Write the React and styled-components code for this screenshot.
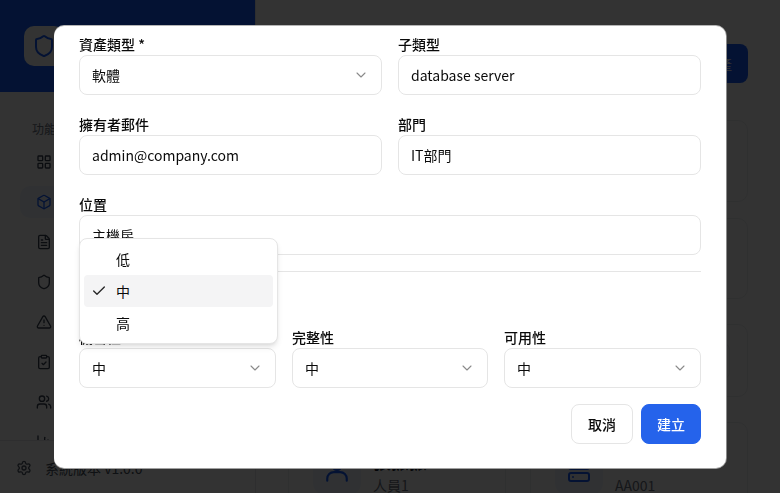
import React from "react";
import styled, { createGlobalStyle } from "styled-components";
import {
  LayoutGrid, Box, FileText, Shield, TriangleAlert, ClipboardCheck, Users, ChartColumn,
  Settings, ChevronDown, Check, Server,
} from "lucide-react";

const GlobalStyle = createGlobalStyle`
  html, body { margin: 0; padding: 0; height: 100%; }
  body { font-family: "Noto Sans CJK TC", "Noto Sans", sans-serif; color: #0a0a0a; overflow: hidden; background: #fff; }
  * { box-sizing: border-box; }
`;

const Page = styled.div`
  display: flex;
  width: 780px;
  height: 493px;
  overflow: hidden;
  background: #fdfeff;
`;

const Sidebar = styled.aside`
  width: 256px;
  height: 493px;
  flex: none;
  display: flex;
  flex-direction: column;
  background: #fff;
  border-right: 1px solid #e5e7eb;
`;

const Brand = styled.div`
  height: 92px;
  flex: none;
  padding: 26px 24px;
  background: #155dfc;
`;

const BrandLogo = styled.div`
  width: 40px;
  height: 40px;
  border-radius: 10px;
  background: #fff;
  display: flex;
  align-items: center;
  justify-content: center;
  color: #155dfc;
`;

const Nav = styled.nav`
  flex: 1;
  min-height: 0;
  overflow: hidden;
  padding: 28px 20px 0;
`;

const NavTitle = styled.div`
  font-size: 12px;
  line-height: 18px;
  color: #6b7280;
  margin: 0 0 8px 12px;
`;

const NavItem = styled.div`
  height: 32px;
  margin-bottom: 8px;
  padding-left: 16px;
  display: flex;
  align-items: center;
  border-radius: 10px;
  color: ${({ $active }) => ($active ? "#155dfc" : "#374151")};
  background: ${({ $active }) => ($active ? "#eff6ff" : "transparent")};
`;

const SideFooter = styled.div`
  height: 53px;
  flex: none;
  display: flex;
  align-items: center;
  gap: 13px;
  padding: 1px 0 0 16px;
  border-top: 1px solid #e5e7eb;
  font-size: 14px;
  color: #4b5563;
`;

const Main = styled.main`
  flex: 1;
  padding: 44px 32px 0;
  display: flex;
  flex-direction: column;
  align-items: flex-end;
`;

const PageButton = styled.div`
  width: 100px;
  height: 39px;
  flex: none;
  padding-right: 16px;
  border-radius: 8px;
  background: #155dfc;
  color: #fff;
  font-size: 14px;
  display: flex;
  align-items: center;
  justify-content: flex-end;
`;

const CardGrid = styled.div`
  align-self: stretch;
  flex: none;
  margin-top: 37px;
  display: grid;
  grid-template-columns: 218px 218px;
  grid-template-rows: 82px 81px 82px 91px;
  column-gap: 24px;
  row-gap: 16px;
  align-items: end;
`;

const AssetCard = styled.div`
  height: ${({ $height }) => $height}px;
  background: #fff;
  border: 1px solid #eceef1;
  border-radius: 10px;
  padding: 24px;
  display: flex;
  align-items: flex-start;
  gap: 12px;
`;

const StatusBox = styled.div`
  width: 70px;
  height: 38px;
  flex: none;
  align-self: center;
  margin: 0 -7px 0 auto;
  border: 1px solid #eceef1;
  border-radius: 8px;
`;

const AssetIcon = styled.div`
  width: 48px;
  height: 48px;
  flex: none;
  border-radius: 12px;
  background: #eff6ff;
  color: #155dfc;
  display: flex;
  align-items: center;
  justify-content: center;
`;

const AssetText = styled.div`
  font-size: 14px;
  line-height: 20px;
  color: #6b7280;
  strong { display: block; font-size: 18px; line-height: 28px; font-weight: 700; color: #111827; }
`;

const Overlay = styled.div`
  position: fixed;
  inset: 0;
  background: rgba(0, 0, 0, 0.8);
`;

const Dialog = styled.div`
  position: fixed;
  left: 54px;
  top: 26px;
  width: 672px;
  height: 442px;
  padding: 0 25px;
  background: #fff;
  border-radius: 10px;
  box-shadow: 0 -1px 0 #b5b5b5, 0 1px 0 #a0a0a0, 1px 0 0 #8a8a8a;
  overflow: hidden;
`;

const FormBody = styled.div`
  height: 362px;
  overflow: hidden;
`;

const TwoCols = styled.div`
  display: grid;
  grid-template-columns: 303px 303px;
  column-gap: 16px;
  row-gap: 21px;
  margin-top: 10px;
`;

const Field = styled.div`
  grid-column: ${({ $wide }) => ($wide ? "1 / -1" : "auto")};
  display: flex;
  flex-direction: column;
`;

const Label = styled.label`
  font-size: 14px;
  line-height: 17px;
  margin-bottom: 2px;
  font-weight: 500;
  color: #0a0a0a;
`;

const Control = styled.div`
  height: 40px;
  padding: 0 12px;
  display: flex;
  align-items: center;
  justify-content: space-between;
  border: 1px solid #e5e5e5;
  border-radius: 8px;
  background: #fff;
  font-size: 14px;
  color: #0a0a0a;
  svg { color: #8a8a8a; flex: none; }
`;

const Divider = styled.hr`
  margin: 16px 0 0;
  border: 0;
  border-top: 1px solid #e5e5e5;
`;

const CiaTitle = styled.div`
  height: 57px;
`;

const ThreeCols = styled.div`
  display: grid;
  grid-template-columns: 197px 196px 197px;
  column-gap: 16px;
`;

const Actions = styled.div`
  display: flex;
  justify-content: flex-end;
  gap: 8px;
  margin-top: 16px;
`;

const Button = styled.button`
  height: 40px;
  padding: 0;
  width: ${({ $primary }) => ($primary ? "60px" : "62px")};
  border-radius: 8px;
  border: 1px solid ${({ $primary }) => ($primary ? "#2563eb" : "#e5e5e5")};
  background: ${({ $primary }) => ($primary ? "#2563eb" : "#fff")};
  color: ${({ $primary }) => ($primary ? "#fff" : "#0a0a0a")};
  font: 500 14px "Noto Sans CJK TC", sans-serif;
`;

const Menu = styled.div`
  position: fixed;
  left: 79px;
  top: 238px;
  width: 199px;
  height: 106px;
  padding: 4px;
  background: #fff;
  border: 1px solid #e5e5e5;
  border-radius: 8px;
  box-shadow: 0 4px 6px -1px rgba(0, 0, 0, 0.1), 0 2px 4px -2px rgba(0, 0, 0, 0.1);
`;

const MenuItem = styled.div`
  position: relative;
  height: 32px;
  padding-left: 32px;
  display: flex;
  align-items: center;
  border-radius: 4px;
  font-size: 14px;
  color: #0a0a0a;
  background: ${({ $active }) => ($active ? "#f4f4f5" : "transparent")};
`;

const MenuCheck = styled.span`
  position: absolute;
  left: 7px;
  top: 8px;
  display: flex;
  color: #262626;
`;

const navIcons = [LayoutGrid, Box, FileText, Shield, TriangleAlert, ClipboardCheck, Users, ChartColumn];

const Select = ({ value }) => (
  <Control>
    {value}
    <ChevronDown size={16} strokeWidth={1.6} />
  </Control>
);

// shoulders and head of the staff asset icon
const PersonIcon = () => (
  <svg width="26" height="26" viewBox="0 0 24 24" fill="none" stroke="currentColor" strokeWidth="2" strokeLinecap="round" strokeLinejoin="round">
    <circle cx="12" cy="7" r="4" />
    <path d="M3 21v-2a6 6 0 0 1 6-6h6a6 6 0 0 1 6 6v2" />
  </svg>
);

export default function App() {
  return (
    <>
      <GlobalStyle />
      <Page>
        <Sidebar>
          <Brand>
            <BrandLogo><Shield size={24} /></BrandLogo>
          </Brand>
          <Nav>
            <NavTitle>功能選單</NavTitle>
            {navIcons.map((Icon, i) => (
              <NavItem key={i} $active={i === 1}><Icon size={16} /></NavItem>
            ))}
          </Nav>
          <SideFooter>
            <Settings size={16} />
            系統版本 v1.0.0
          </SideFooter>
        </Sidebar>
        <Main>
          <PageButton>新增資產</PageButton>
          <CardGrid>
            <AssetCard $height={82} />
            <AssetCard $height={82} />
            <AssetCard $height={81} />
            <AssetCard $height={81} />
            <AssetCard $height={73} />
            <AssetCard $height={73}><StatusBox /></AssetCard>
            <AssetCard $height={82}>
              <AssetIcon><PersonIcon /></AssetIcon>
              <AssetText><strong>張振振</strong>人員1</AssetText>
            </AssetCard>
            <AssetCard $height={82}>
              <AssetIcon><Server size={24} /></AssetIcon>
              <AssetText><strong>SCE-IT-01</strong>AA001</AssetText>
            </AssetCard>
          </CardGrid>
        </Main>
      </Page>
      <Overlay />
      <Dialog>
        <FormBody>
          <TwoCols>
            <Field>
              <Label>資產類型 *</Label>
              <Select value="軟體" />
            </Field>
            <Field>
              <Label>子類型</Label>
              <Control>database server</Control>
            </Field>
            <Field>
              <Label>擁有者郵件</Label>
              <Control>admin@company.com</Control>
            </Field>
            <Field>
              <Label>部門</Label>
              <Control>IT部門</Control>
            </Field>
            <Field $wide>
              <Label>位置</Label>
              <Control>主機房</Control>
            </Field>
          </TwoCols>
          <Divider />
          <CiaTitle />
          <ThreeCols>
            <Field>
              <Label>機密性</Label>
              <Select value="中" />
            </Field>
            <Field>
              <Label>完整性</Label>
              <Select value="中" />
            </Field>
            <Field>
              <Label>可用性</Label>
              <Select value="中" />
            </Field>
          </ThreeCols>
        </FormBody>
        <Actions>
          <Button>取消</Button>
          <Button $primary>建立</Button>
        </Actions>
      </Dialog>
      <Menu>
        <MenuItem>低</MenuItem>
        <MenuItem $active>
          <MenuCheck><Check size={16} /></MenuCheck>
          中
        </MenuItem>
        <MenuItem>高</MenuItem>
      </Menu>
    </>
  );
}
